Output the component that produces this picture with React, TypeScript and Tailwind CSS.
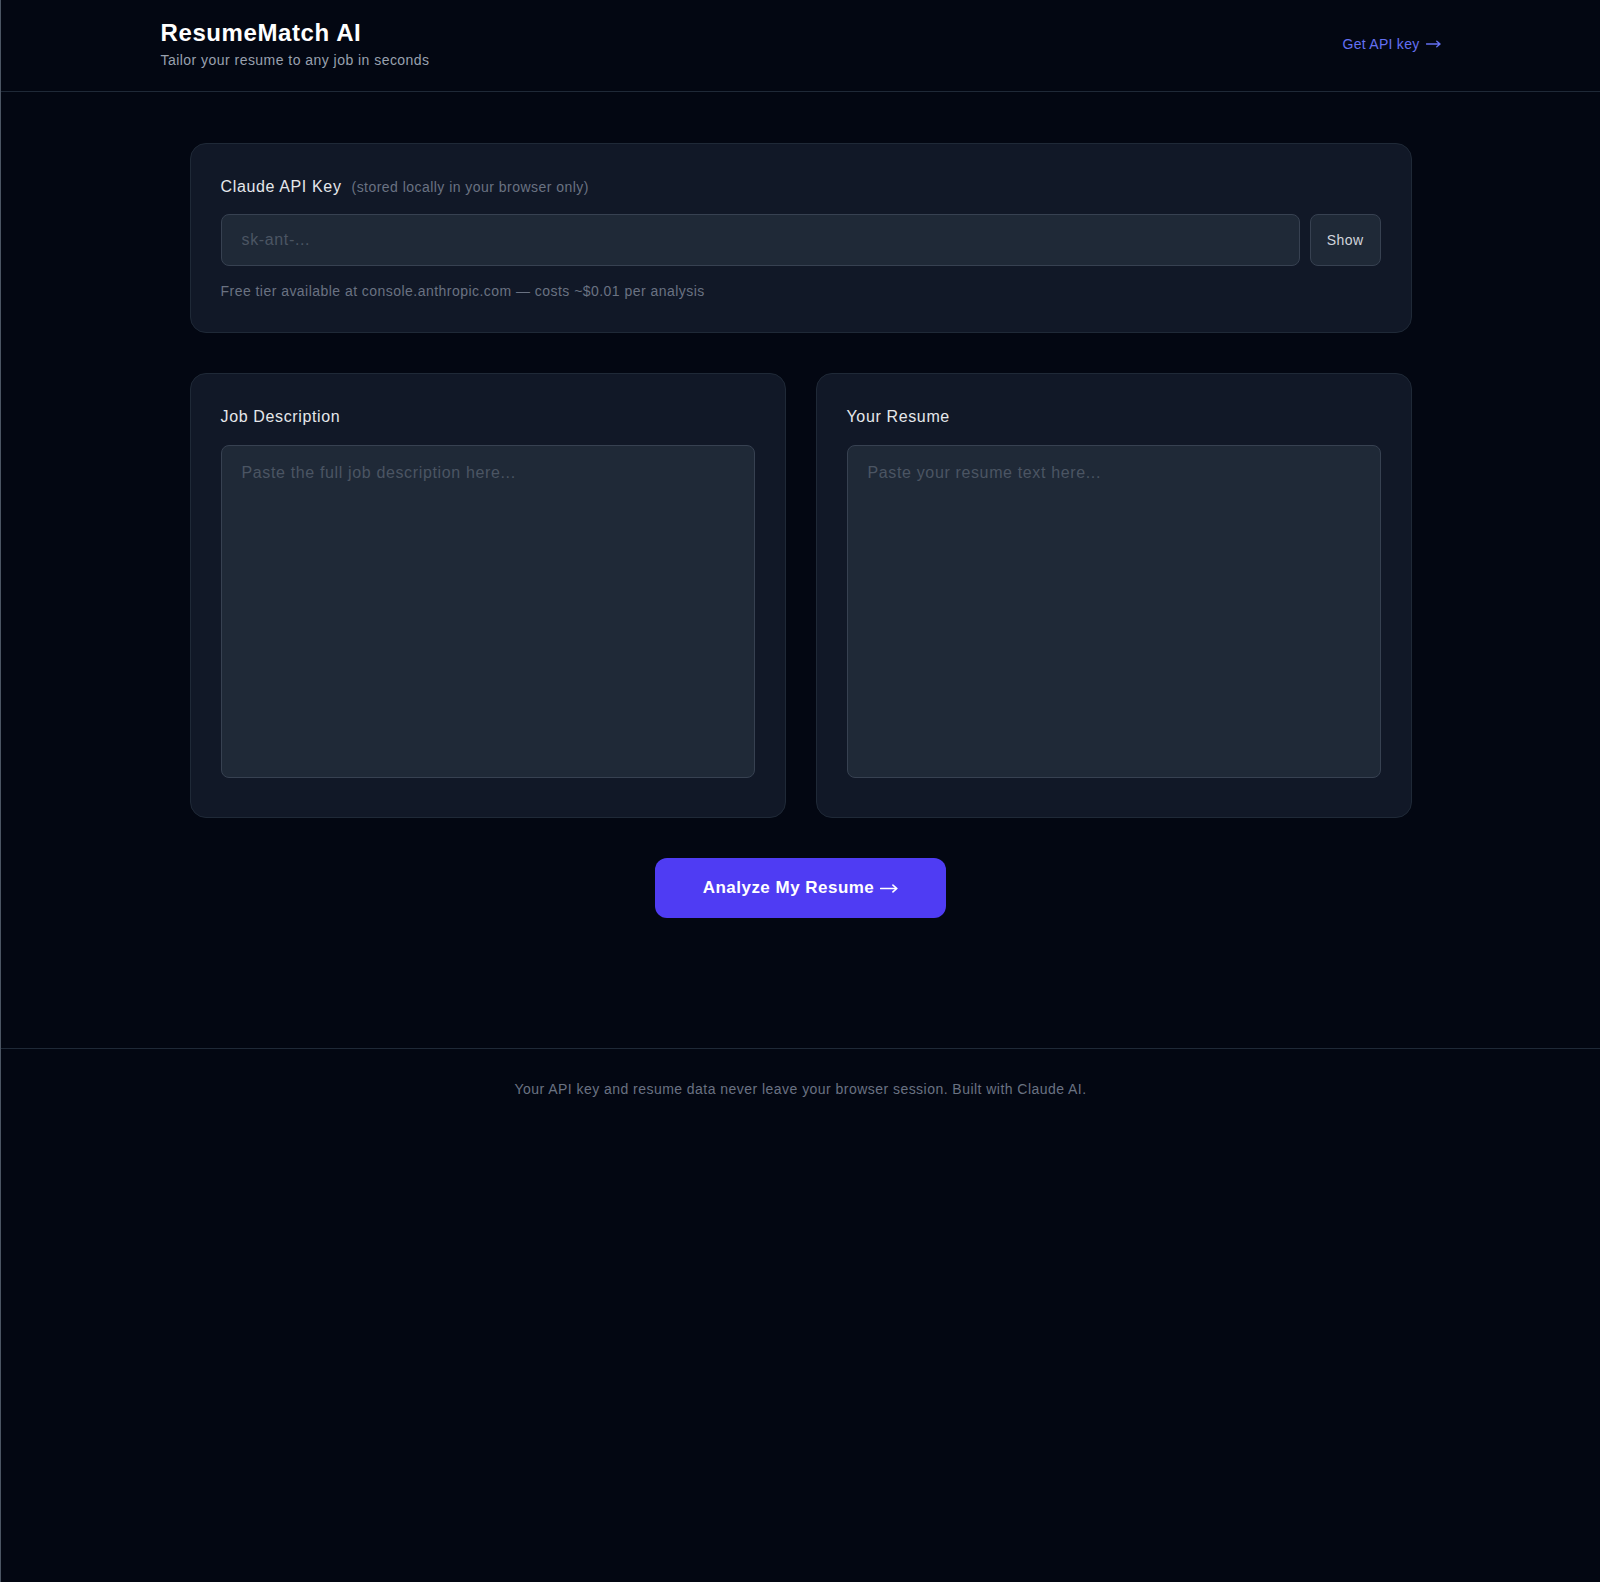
import { useState } from "react";

const Arrow = ({ w, h }: { w: number; h: number }) => (
  <svg width={w} height={h} viewBox="0 0 16 8" fill="none" className="inline-block align-middle">
    <path d="M0.5 4H15M11.5 1L15 4L11.5 7" stroke="currentColor" strokeWidth="1.4" strokeLinecap="round" strokeLinejoin="round" />
  </svg>
);

const App = () => {
  const [apiKey, setApiKey] = useState("");
  const [showKey, setShowKey] = useState(false);
  const [job, setJob] = useState("");
  const [resume, setResume] = useState("");

  return (
    <div
      className="min-h-screen bg-[#030712] border-l border-[#4b5563] text-gray-200"
      style={{ fontFamily: '"Liberation Sans", Arial, sans-serif' }}
    >
      {/* Header */}
      <header className="border-b border-[#1f2937]">
        <div className="max-w-7xl mx-auto flex items-center justify-between pt-[17px] pb-[21px]">
          <div>
            <h1 className="text-2xl leading-8 font-bold tracking-[0.025em] text-white">ResumeMatch AI</h1>
            <p className="mt-px text-sm leading-5 tracking-[0.033em] text-gray-400">Tailor your resume to any job in seconds</p>
          </div>
          <a href="#" className="flex items-center gap-1.5 text-sm font-medium tracking-[0.02em] text-[#6470f3] hover:text-indigo-300">
            Get API key <Arrow w={15} h={8} />
          </a>
        </div>
      </header>

      <main className="max-w-[1222px] mx-auto pt-[51px] pb-[130px]">
        {/* API key card */}
        <section className="rounded-2xl border border-[#1f2937] bg-[#111827] px-[30px] pt-[31px] pb-[31px]">
          <div className="flex items-baseline gap-2.5 mb-[15px]">
            <span className="text-base leading-6 font-medium tracking-[0.04em] text-gray-200">Claude API Key</span>
            <span className="text-sm tracking-[0.033em] text-gray-500">(stored locally in your browser only)</span>
          </div>
          <div className="flex gap-2.5">
            <input
              type={showKey ? "text" : "password"}
              value={apiKey}
              onChange={(e) => setApiKey(e.target.value)}
              placeholder="sk-ant-..."
              className="flex-1 rounded-lg border border-[#374151] bg-[#1f2937] px-5 py-[13px] text-base leading-6 tracking-[0.04em] text-gray-200 placeholder:text-[#4b5563] outline-none focus:border-indigo-500"
            />
            <button
              onClick={() => setShowKey(!showKey)}
              className="rounded-lg border border-[#374151] bg-[#1f2937] px-4 text-sm font-medium tracking-[0.033em] text-gray-300"
            >
              {showKey ? "Hide" : "Show"}
            </button>
          </div>
          <p className="mt-[15px] text-sm leading-5 tracking-[0.033em] text-gray-500">
            Free tier available at console.anthropic.com — costs ~$0.01 per analysis
          </p>
        </section>

        {/* Job + resume inputs */}
        <div className="grid grid-cols-2 gap-[30px] mt-10">
          <section className="rounded-2xl border border-[#1f2937] bg-[#111827] px-[30px] pt-[31px] pb-[39px]">
            <label className="block mb-4 text-base leading-6 font-medium tracking-[0.04em] text-gray-200">Job Description</label>
            <textarea
              value={job}
              onChange={(e) => setJob(e.target.value)}
              placeholder="Paste the full job description here..."
              className="block w-full h-[333px] resize-none rounded-lg border border-[#374151] bg-[#1f2937] px-5 py-[15px] text-base leading-6 tracking-[0.04em] text-gray-200 placeholder:text-[#4b5563] outline-none focus:border-indigo-500"
            />
          </section>
          <section className="rounded-2xl border border-[#1f2937] bg-[#111827] px-[30px] pt-[31px] pb-[39px]">
            <label className="block mb-4 text-base leading-6 font-medium tracking-[0.04em] text-gray-200">Your Resume</label>
            <textarea
              value={resume}
              onChange={(e) => setResume(e.target.value)}
              placeholder="Paste your resume text here..."
              className="block w-full h-[333px] resize-none rounded-lg border border-[#374151] bg-[#1f2937] px-5 py-[15px] text-base leading-6 tracking-[0.04em] text-gray-200 placeholder:text-[#4b5563] outline-none focus:border-indigo-500"
            />
          </section>
        </div>

        <div className="flex justify-center mt-10">
          <button className="flex items-center gap-1.5 rounded-xl bg-[#4f3cf3] px-[48px] py-[17px] text-[17px] leading-[26px] font-bold tracking-[0.028em] text-white hover:bg-[#4330e0]">
            Analyze My Resume <Arrow w={18} h={9} />
          </button>
        </div>
      </main>

      <footer className="border-t border-[#1f2937] pt-[30px] pb-10 text-center text-sm leading-5 tracking-[0.033em] text-gray-500">
        Your API key and resume data never leave your browser session. Built with Claude AI.
      </footer>
    </div>
  );
};

export default App;
